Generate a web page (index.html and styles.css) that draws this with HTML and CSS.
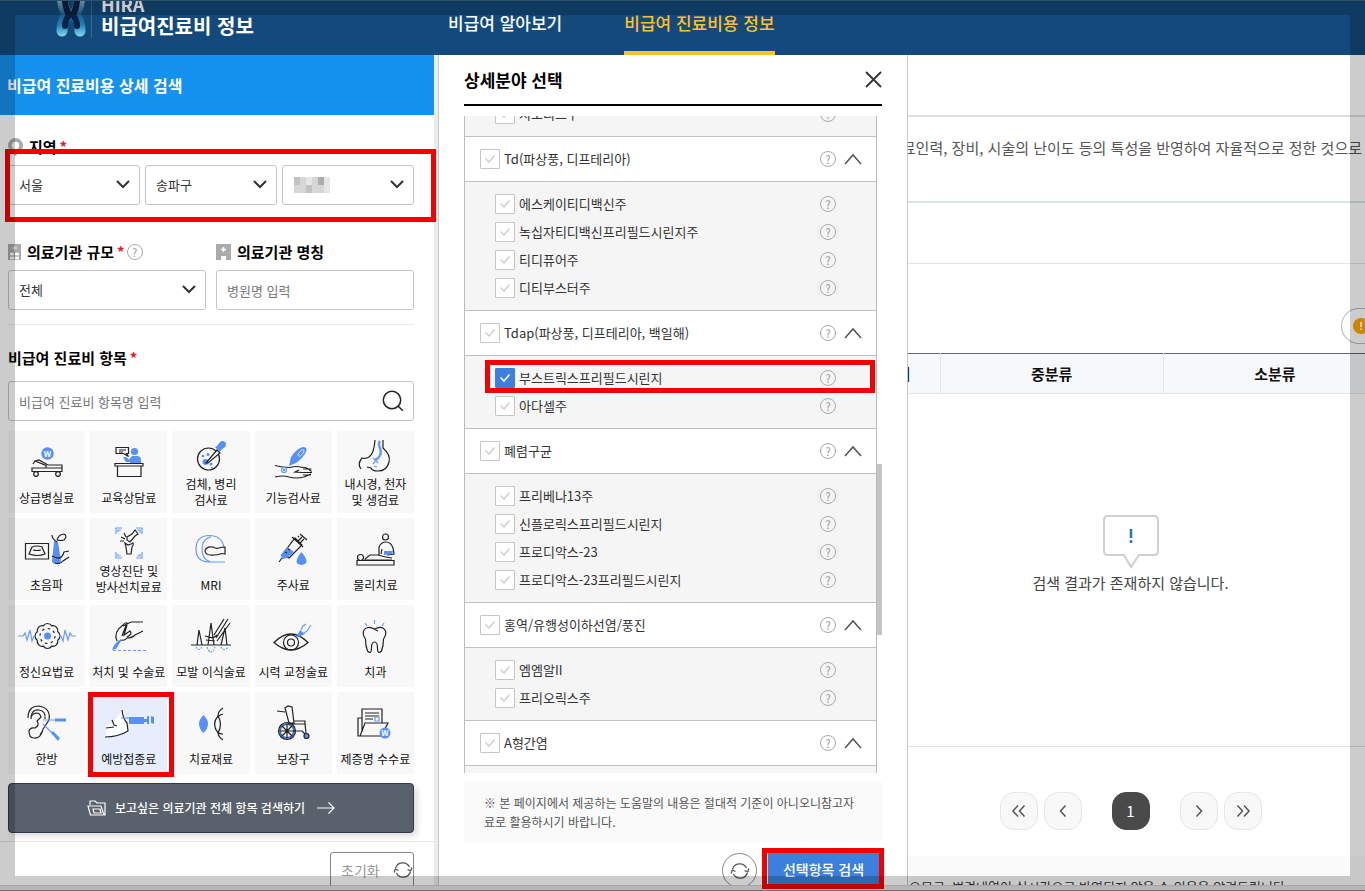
FILE: index.html
```html
<!DOCTYPE html>
<html lang="ko">
<head>
<meta charset="utf-8">
<title>비급여진료비 정보</title>
<link rel="stylesheet" href="styles.css">
</head>
<body>
<svg class="defs" aria-hidden="true">
  <symbol id="down" viewBox="0 0 14 9"><path d="M1.500 1.500 7 7l5.500-5.500" fill="none" stroke="#333" stroke-width="2" stroke-linecap="round"/></symbol>
  <symbol id="up" viewBox="0 0 18 12"><path d="M1 11 9 2l8 9" fill="none" stroke="#555" stroke-width="1.500"/></symbol>
  <symbol id="reload" viewBox="0 0 20 18"><g fill="none" stroke="#555" stroke-width="1.300"><path d="M2.500 7.500A7.500 7.500 0 0 1 16.500 6M17.500 10.500A7.500 7.500 0 0 1 3.500 12"/><path d="M17.800 10 18.800 6.500M17.800 10 14.500 8.500M2.200 8 1.200 11.500M2.200 8 5.500 9.500"/></g></symbol>
</svg>

<header class="top">
  <a class="brand" href="#">
    <svg class="brand-mark" viewBox="0 0 32 38" aria-hidden="true">
      <defs><linearGradient id="lg" gradientUnits="userSpaceOnUse" x1="0" y1="0" x2="0" y2="38"><stop offset="0" stop-color="#7fb4c8"/><stop offset=".4" stop-color="#1d5f94"/><stop offset=".65" stop-color="#1f7fb4"/><stop offset="1" stop-color="#8fe6f6"/></linearGradient></defs>
      <g fill="none" stroke-linecap="round">
        <path d="M7-8Q7 8 13 15 7 20 7 31M25-8Q25 8 19 15 25 20 25 31" stroke="url(#lg)" stroke-width="11"/>
        <path d="M9-8Q10 8 14 15 10 20 10 26M23-8Q22 8 18 15 22 20 22 26" stroke="#0a2044" stroke-width="6"/>
        <path d="M16 24v14" stroke="#13497b" stroke-width="4"/>
      </g>
    </svg>
    <span class="brand-text"><span class="brand-en">HIRA</span><span>비급여진료비 정보</span></span>
  </a>
  <nav class="nav">
    <a href="#">비급여 알아보기</a>
    <a href="#" class="on">비급여 진료비용 정보</a>
  </nav>
</header>

<main class="main">
  <section class="search">
    <h1 class="search-title">비급여 진료비용 상세 검색</h1>
    <form class="form">
      <div class="label-row">
        <svg width="15" height="18" viewBox="0 0 15 18" aria-hidden="true"><path d="M7.500 0a7.500 7.500 0 0 1 7.500 7.500c0 5-7.500 10.500-7.500 10.500S0 12.500 0 7.500A7.500 7.500 0 0 1 7.500 0z" fill="#aaa"/><circle cx="7.500" cy="7.500" r="3.700" fill="#fff"/></svg>
        <span class="label">지역</span><span class="req">*</span>
      </div>
      <div class="row three">
        <span class="pick"><select aria-label="시도"><option>서울</option></select><svg><use href="#down"/></svg></span>
        <span class="pick"><select aria-label="시군구"><option>송파구</option></select><svg><use href="#down"/></svg></span>
        <span class="pick"><select aria-label="읍면동"><option></option></select><svg><use href="#down"/></svg>
          <span class="mosaic" aria-hidden="true"><i></i><i></i><i></i><i></i><i></i><i></i><i></i><i></i><i></i><i></i><i></i><i></i></span></span>
        <span class="mark mark-region"></span>
      </div>

      <div class="row two">
        <div>
          <div class="label-row">
            <svg width="13" height="16" viewBox="0 0 13 16" aria-hidden="true"><path fill="#aaa" d="M0 0h13v16H0z"/><path d="M6.500 1.500v5M4 4h5M2.500 9h3v2h-3zM7.500 9h3v2h-3zM2.500 13h3v2h-3zM7.500 13h3v2h-3z" stroke="#fff" fill="#fff" stroke-width=".8"/></svg>
            <label class="label" for="scale">의료기관 규모</label><span class="req">*</span>
            <button type="button" class="help help-label" aria-label="도움말">?</button>
          </div>
          <span class="pick"><select id="scale"><option>전체</option></select><svg><use href="#down"/></svg></span>
        </div>
        <div>
          <div class="label-row">
            <svg width="15" height="16" viewBox="0 0 15 16" aria-hidden="true"><path fill="#aaa" d="M0 0h15v16h-5v-4H5v4H0z"/><path d="M7.500 3v5M5 5.500h5" stroke="#fff" stroke-width="1.500"/></svg>
            <label class="label" for="name">의료기관 명칭</label>
          </div>
          <input id="name" class="text" type="text" placeholder="병원명 입력">
        </div>
      </div>

      <div class="items-head"><label class="label" for="item">비급여 진료비 항목</label><span class="req">*</span></div>
      <div class="find">
        <input id="item" class="text" type="text" placeholder="비급여 진료비 항목명 입력">
        <button type="button" class="find-btn" aria-label="검색"><svg width="22" height="22" viewBox="0 0 22 22"><circle cx="10" cy="10" r="8.700"/><path d="m16.300 16.300 4.500 4.500"/></svg></button>
      </div>

      <div class="tiles">
        <button type="button" class="tile"><svg viewBox="0 0 60 40"><circle class="b" cx="30.500" cy="10.500" r="6.200"/><text x="30.500" y="13.500">W</text><path d="M15 25h30v3.500H15zM16 21l2-3 11 4.500v2.500M18 18l4-1 9 5h14v3"/><circle cx="19" cy="31" r="2.300"/><circle cx="41" cy="31" r="2.300"/></svg><span>상급병실료</span></button>
        <button type="button" class="tile"><svg viewBox="0 0 60 40"><path d="M17 4.500h12.500v6h-2l2 3-5-3H17zM20 7h7M20 9h4"/><circle class="b" cx="35.500" cy="8.500" r="3.600"/><path class="b" d="M24 14.500l3-.5 3 2.500 3-3.500h6q3 1 3 4v4H31v-2h-4z"/><path d="M16 20.500h28V23H16zM18.500 23h23.500v10.500H18.500z"/></svg><span>교육상담료</span></button>
        <button type="button" class="tile"><svg viewBox="0 0 60 40"><circle cx="27.500" cy="23" r="11"/><circle class="b" cx="24.500" cy="26" r="3"/><circle class="b" cx="30" cy="28" r="1.500"/><circle class="b" cx="22" cy="20" r="1.300"/><circle class="b" cx="27" cy="18.500" r="1.500"/><circle class="b" cx="31" cy="32" r="1"/><path fill="#fff" d="m25 27 11-13 3 3-12 10z"/><path class="b" d="m34 11 2-1 3-4q3-2 5 0t0 5l-4 3-1 2z"/></svg><span>검체, 병리<br>검사료</span></button>
        <button type="button" class="tile"><svg viewBox="0 0 60 40"><path class="b" d="m26 23 2-9q6-9 12-10 5 0 3 5-3 6-10 11z"/><ellipse cx="38" cy="10" rx="1.800" ry="4" transform="rotate(40 38 10)" style="stroke:#fff;stroke-width:.7"/><path d="M12 22.500q7 2 15 2 7-2 12 0 3-1 7 2l2.500 2M12 34q8-2 14 0 7 2 15 0l7-3M36 27l-4 2 7 .5M40 26h8.500M39 29.500h10M40 32h8"/><circle class="l" cx="21" cy="27" r="2.500"/><circle class="l" cx="21" cy="27" r=".7"/></svg><span>기능검사료</span></button>
        <button type="button" class="tile"><svg viewBox="0 0 60 40"><path d="M30 4q-1 14-6 17-3 2-7 1-5 6-1 11M38 4v8q8 7 6 14-2 9-11 9-6 0-7-3l-4-1"/><path class="l" style="stroke-width:2.500" d="M35 5q-2 3 0 7 3 8-5 12"/><path class="l" d="m28 22 5 5M33 22l-5 6M29 30l3 1"/></svg><span>내시경, 천자<br>및 생검료</span></button>

        <button type="button" class="tile"><svg viewBox="0 0 60 40"><path d="M8.500 13.500h23V29h-23zM15 17q5-2 10 0l3 7q-7 3-16 0zM16 20q4 1 8 0"/><path class="b" d="M37 12q2-2 4 0l3 19q0 3-5 3-4 0-4-3z"/><path d="M40 12q-5-3-5-7M40 10q2-6 7-6 4 2 0 6-4 1-7 0M35 26l5 2q5 1 7-6l5-1M38 33q5 2 8-2l6-4"/></svg><span>초음파</span></button>
        <button type="button" class="tile"><svg viewBox="0 0 60 40"><path class="l" d="M17 11V5h6M37 5h6v6M43 29v6h-6M23 35h-6v-6M19 9V7h3M38 7h3v3M41 31v2h-3M22 33h-3v-2"/><path d="m28 14 5-3 3-4 3 4-3 2-5 6-3-2zM26 20l3 2 3-1 2-1q1 2-1 4l-1 7h-4l-1-7zM22 14l4 2M25 10l2 4M21 18h4"/></svg><span>영상진단 및<br>방사선치료료</span></button>
        <button type="button" class="tile"><svg viewBox="0 0 60 40"><path class="l" d="M44 32H27Q15 31 15 19 15 6 28 5.500q13 0 15 12M30 32q-9-2-9-13 0-10 9-12"/><path d="M44 17v7q-3-1-5 0t-6 1q-8 1-9-4 1-5 8-4 3 2 6 1 3-1 6-1z"/></svg><span>MRI</span></button>
        <button type="button" class="tile"><svg viewBox="0 0 60 40"><path d="m32 8 7 7-13 13-7-3zM29 7l11 10M35 11l4-4M37 13l4-4M37 4l7 6M35 7l1-1"/><path class="b" d="m24 17 7 5-7 6-5 1-1-4z"/><path d="m19 28-3 4M22 22l2 1M25 19l2 1"/><path class="b" d="M38.500 22q10 12 0 13-10-1 0-13z"/></svg><span>주사료</span></button>
        <button type="button" class="tile"><svg viewBox="0 0 60 40"><path d="M12 30.500h37V35H12z"/><circle cx="15.500" cy="27.500" r="3"/><circle cx="40.500" cy="7" r="3"/><path d="M19 30h28M20 29l5-4h8q6 2 14 3M34 25v-8q2-5 7-5t7 6l1 6-7 1M37 19l-1 5"/><path class="b" d="M39 21h9l-1 3-8 1z"/></svg><span>물리치료</span></button>

        <button type="button" class="tile"><svg viewBox="0 0 60 40"><path d="M26.300 8.800a5 5 0 0 1 8.400 0a5 5 0 0 1 6 6a5 5 0 0 1 0 8.400a5 5 0 0 1-6 6a5 5 0 0 1-8.400 0a5 5 0 0 1-6-6a5 5 0 0 1 0-8.400a5 5 0 0 1 6-6z"/><circle cx="30.500" cy="19" r="7.500" stroke-dasharray="2.500 3.390"/><circle class="b" cx="30.500" cy="19" r="3.500"/><path class="l" d="M1 19h5l2-3 2 7 3-10 2 11 2-5h1M42 19h2l2 5 2-11 3 10 2-7 2 3h4"/></svg><span>정신요법료</span></button>
        <button type="button" class="tile"><svg viewBox="0 0 60 40"><path d="M18 24q-4-9 6-16 2-3 4-2l-5 13M24 9l8-4q6 0 12 0M21 23q5 1 7-2 5 0 8-3l8-4M28 8l-3 10 6-4q3 3-3 6"/><path class="b" d="m20 23 2 1-5 8-4 1q2-6 7-10z"/><path class="l" stroke-dasharray="3 2" d="M14 33.500h34"/></svg><span>처치 및 수술료</span></button>
        <button type="button" class="tile"><svg viewBox="0 0 60 40"><path d="M10 28h40M16 28l2-15 3 15M27 28l3-22 3 22M40 28l4-17 2 17M33 18 43 2M35 21 47 2M36 24 49 6M24 19l8 2 4-3M25 23l9 1"/><path class="l" stroke-dasharray="2 1" d="M15 30q3 5 6 0M26 30q4 10 8 0M40 30q3 5 7 0"/></svg><span>모발 이식술료</span></button>
        <button type="button" class="tile"><svg viewBox="0 0 60 40"><path d="M11 25.500q17-17 34 0-17 15-34 0z"/><circle cx="28" cy="25.500" r="7.500"/><circle cx="28" cy="25.500" r="3.500"/><path class="b" d="m33 21 4-8 5 4z"/><path class="l" d="m38 13 2-4 3-2M41 16l3-2 4-6"/></svg><span>시력 교정술료</span></button>
        <button type="button" class="tile"><svg viewBox="0 0 60 40"><path d="M29.500 12q8-4 11 2 1 4-2 8 0 7-2 12-4 4-4-3 0-6-3-6t-3 6q0 7-4 3-2-5-2-12-3-4-2-8 3-6 11-2zM27 11l6 3"/><path class="l" d="M20 6l2 3M29.500 3v4M39 6l-2 3"/></svg><span>치과</span></button>

        <button type="button" class="tile"><svg viewBox="0 0 60 40"><path d="M11 14Q11 2 22 2q12 2 10 14-3 5-6 9-2 10-9 9-5 0-5-7 1-4 6-3 5-3 2-7l4-4q-1-4-5-4-5 1-5 6M14 13q1-8 8-7 7 1 6 9M26 26l-3 5"/><path class="l" d="M26 16h12M26 20l9 9"/><path class="b" d="M38 14.500h11v3H38zM34 29l2-2 7 7-2 3z"/></svg><span>한방</span></button>
        <button type="button" class="tile picked"><svg viewBox="0 0 60 40"><path fill="#fff" stroke="none" d="m7 23 9-7 8-10 5 22q-12 4-22 5z"/><path d="M23 6q1 9 5 13l1 8q-10 6-23 6M7 24l8-1M13 16l2 5 3 1"/><path class="b" d="M30 13h15v7H30zM45 15h4v3h-4zM48 12h2v8h-2zM52 12l3 1v7l-3-1z"/><path class="l" d="M22 14h8"/></svg><span>예방접종료</span><i class="mark mark-tile"></i></button>
        <button type="button" class="tile"><svg viewBox="0 0 60 40"><path class="b" d="M22.500 11q9 9 0 18-9-9 0-18z"/><path d="M42 4q-5 3-5 8M42 36q-5-3-5-8M37 12q-7 8 0 17M37 12q5 8 0 17M42 10q-4 1-5 3M42 30q-4 0-5-2"/></svg><span>치료재료</span></button>
        <button type="button" class="tile"><svg viewBox="0 0 60 40"><circle cx="24" cy="27" r="7" style="stroke:#4272c4;stroke-width:2"/><circle cx="24" cy="27" r="8.500"/><path d="M24 20v14M17 27h14M19 22l10 10M29 22 19 32M22 4l3-2 4 1 2 16h-5zM14 7l8 1M31 17h11v3H30M25 20h17l1 9M31 27h8l4 4"/><circle class="b" cx="43.500" cy="32" r="2.500" style="stroke:#222"/></svg><span>보장구</span></button>
        <button type="button" class="tile"><svg viewBox="0 0 60 40"><path d="M17 28V5h20v14M20 9h14M20 12h14M20 15h8M17 14h-4v18h23l7-13H20l-5 13"/><path class="l" d="M30 13h4v4h-4z"/><circle class="b" cx="40" cy="29" r="5.500"/><text x="40" y="32">W</text></svg><span>제증명 수수료</span></button>
      </div>

      <button type="button" class="all">
        <svg width="20" height="17" viewBox="0 0 20 17"><path d="M3 5V1h5l2 2h8v12H3.500L1 6h13l3 9M6 9h7l1 4H7z"/></svg>
        <span>보고싶은 의료기관 전체 항목 검색하기</span>
        <svg width="18" height="12" viewBox="0 0 18 12"><path d="M0 6h17M11.500 .5 17 6l-5.500 5.500"/></svg>
      </button>
    </form>
    <div class="search-foot"><button type="button" class="reset">초기화<svg width="20" height="18"><use href="#reload"/></svg></button></div>
  </section>

  <section class="panel" aria-labelledby="ptitle">
    <div class="panel-head">
      <h2 id="ptitle">상세분야 선택</h2>
      <button type="button" class="close" aria-label="닫기"><svg width="17" height="17" viewBox="0 0 17 17"><path d="m1 1 15 15M16 1 1 16"/></svg></button>
    </div>
    <div class="list-wrap">
      <div class="list">
        <div class="list-in">
          <div class="group-items first"><div class="item"><label><input type="checkbox">지모리스주</label><button class="help" aria-label="도움말">?</button></div></div>

          <div class="group"><label><input type="checkbox">Td(파상풍, 디프테리아)</label><button class="help" aria-label="도움말">?</button><button class="fold" aria-label="접기"><svg><use href="#up"/></svg></button></div>
          <div class="group-items">
            <div class="item"><label><input type="checkbox">에스케이티디백신주</label><button class="help" aria-label="도움말">?</button></div>
            <div class="item"><label><input type="checkbox">녹십자티디백신프리필드시린지주</label><button class="help" aria-label="도움말">?</button></div>
            <div class="item"><label><input type="checkbox">티디퓨어주</label><button class="help" aria-label="도움말">?</button></div>
            <div class="item"><label><input type="checkbox">디티부스터주</label><button class="help" aria-label="도움말">?</button></div>
          </div>

          <div class="group"><label><input type="checkbox">Tdap(파상풍, 디프테리아, 백일해)</label><button class="help" aria-label="도움말">?</button><button class="fold" aria-label="접기"><svg><use href="#up"/></svg></button></div>
          <div class="group-items">
            <div class="item"><label><input type="checkbox" checked>부스트릭스프리필드시린지</label><button class="help" aria-label="도움말">?</button><i class="mark mark-item"></i></div>
            <div class="item"><label><input type="checkbox">아다셀주</label><button class="help" aria-label="도움말">?</button></div>
          </div>

          <div class="group"><label><input type="checkbox">폐렴구균</label><button class="help" aria-label="도움말">?</button><button class="fold" aria-label="접기"><svg><use href="#up"/></svg></button></div>
          <div class="group-items">
            <div class="item"><label><input type="checkbox">프리베나13주</label><button class="help" aria-label="도움말">?</button></div>
            <div class="item"><label><input type="checkbox">신플로릭스프리필드시린지</label><button class="help" aria-label="도움말">?</button></div>
            <div class="item"><label><input type="checkbox">프로디악스-23</label><button class="help" aria-label="도움말">?</button></div>
            <div class="item"><label><input type="checkbox">프로디악스-23프리필드시린지</label><button class="help" aria-label="도움말">?</button></div>
          </div>

          <div class="group"><label><input type="checkbox">홍역/유행성이하선염/풍진</label><button class="help" aria-label="도움말">?</button><button class="fold" aria-label="접기"><svg><use href="#up"/></svg></button></div>
          <div class="group-items">
            <div class="item"><label><input type="checkbox">엠엠알II</label><button class="help" aria-label="도움말">?</button></div>
            <div class="item"><label><input type="checkbox">프리오릭스주</label><button class="help" aria-label="도움말">?</button></div>
          </div>

          <div class="group"><label><input type="checkbox">A형간염</label><button class="help" aria-label="도움말">?</button><button class="fold" aria-label="접기"><svg><use href="#up"/></svg></button></div>
          <div class="group-items last"></div>
        </div>
      </div>
      <div class="track"><div class="thumb"></div></div>
    </div>
    <p class="note">※ 본 페이지에서 제공하는 도움말의 내용은 절대적 기준이 아니오니참고자<br>료로 활용하시기 바랍니다.</p>
    <div class="panel-foot">
      <button type="button" class="round" aria-label="초기화"><svg width="20" height="18"><use href="#reload"/></svg></button>
      <span class="go-wrap"><button type="button" class="go">선택항목 검색</button><i class="mark mark-go"></i></span>
    </div>
  </section>

  <section class="result">
    <div class="gap-top"></div>
    <p class="intro"><span>의료인력, 장비, 시술의 난이도 등의 특성을 반영하여 자율적으로 정한 것으로</span></p>
    <div class="gap-mid"></div>
    <div class="tools"><button type="button" class="pill" aria-label="안내"><svg width="16" height="16" viewBox="0 0 16 16"><circle cx="8" cy="8" r="8" fill="#ffa800"/><path d="M8 4v5M8 10.500v1.500" stroke="#fff" stroke-width="2"/></svg></button></div>
    <table class="grid"><thead><tr><th class="c0">소재지</th><th>중분류</th><th>소분류</th></tr></thead></table>
    <div class="empty">
      <svg width="56" height="54" viewBox="0 0 56 54" aria-hidden="true"><path d="M5 1h46q4 0 4 4v31q0 4-4 4H36l-8 12-7-12H5q-4 0-4-4V5q0-4 4-4z" fill="#fff" stroke="#d0d0d0" stroke-width="2"/><path d="M28 14v9" stroke="#2277b5" stroke-width="2.500"/><circle cx="28" cy="26.500" r="1.500" fill="#2277b5"/></svg>
      <p>검색 결과가 존재하지 않습니다.</p>
    </div>
    <nav class="pages" aria-label="페이지">
      <button aria-label="처음"><svg viewBox="0 0 16 14"><path d="M7 1.500 2 7l5 5.500M13.500 1.500 8.500 7l5 5.500"/></svg></button>
      <button aria-label="이전"><svg viewBox="0 0 16 14"><path d="M10.500 1.500 5.500 7l5 5.500"/></svg></button>
      <button class="cur">1</button>
      <button aria-label="다음"><svg viewBox="0 0 16 14"><path d="m5.500 1.500 5 5.500-5 5.500"/></svg></button>
      <button aria-label="마지막"><svg viewBox="0 0 16 14"><path d="m2.500 1.500 5 5.500-5 5.500M9 1.500 14 7l-5 5.500"/></svg></button>
    </nav>
    <div class="legal"><span>으므로, 변경내역이 실시간으로 반영되지 않을 수 있음을 알려드립니다.</span></div>
  </section>
</main>
<footer class="edge"></footer>
<div class="frame"></div>
</body>
</html>
```
FILE: styles.css
```css
* { box-sizing: border-box; }
body {
  margin: 0;
  height: 100vh;
  display: flex;
  flex-direction: column;
  overflow: hidden;
  background: #fff;
  color: #333;
  font: 13px/20px "Noto Sans CJK KR", "Noto Sans", sans-serif;
}
h1, h2, p { margin: 0; }
a { color: inherit; text-decoration: none; }
button, input, select { font: inherit; color: inherit; }
button { padding: 0; border: 0; background: none; }
svg { display: block; flex: none; }
.defs { width: 0; height: 0; position: absolute; }

/* outline boxes laid over the highlighted controls */
.mark {
  position: absolute;
  z-index: 5;
  border: 5px solid #f50000;
  pointer-events: none;
}
.mark-region { inset: -16px -22px -17px -3px; }
.mark-tile { inset: 0 -7px -3px -2px; }
.mark-item { inset: -4px 1px -1px 20px; }
.mark-go { inset: -5px -5px -4px -6px; }

.frame {
  position: fixed;
  inset: 0;
  z-index: 10;
  border: 15px solid rgba(0, 0, 0, .2);
  pointer-events: none;
}
.edge {
  position: relative;
  z-index: 2;
  flex: 0 0 6px;
  background: #e4e4e4;
  border-top: 1px solid #d0d0d0;
  border-bottom: 1px solid #8c8c8c;
}

.top {
  flex: 0 0 55px;
  display: flex;
  overflow: hidden;
  background: #13497b;
  border-top: 1px solid #3d6687;
  color: #fff;
}
.brand {
  flex: 0 0 393px;
  height: 37px;
  margin-left: 55px;
  display: flex;
  align-items: flex-end;
}
.brand-mark { width: 32px; height: 38px; }
.brand-text {
  display: flex;
  flex-direction: column;
  margin-left: 4px;
  padding-left: 9px;
  border-left: 1px solid #3d6687;
  font-size: 20px;
  font-weight: 700;
  line-height: 24px;
}
.brand-en { font-size: 18px; line-height: 20px; }
.nav { display: flex; gap: 62px; font-size: 17px; font-weight: 500; line-height: 44px; }
.nav .on { color: #fdc02f; border-bottom: 4px solid #fdc02f; }

.main { flex: 1; min-height: 0; display: flex; }

/* search column */
.search {
  flex: 0 0 439px;
  display: flex;
  flex-direction: column;
  border-right: 1px solid #c8c8c8;
  box-shadow: inset -4px 0 #ececec;
  padding-right: 4px;
}
.search-title {
  flex: none;
  padding-left: 7px;
  background: #1591f0;
  color: #fff;
  font-size: 16px;
  font-weight: 700;
  line-height: 60px;
}
.form { padding: 22px 20px 8px 8px; display: flex; flex-direction: column; }
.label-row { display: flex; align-items: center; gap: 6px; height: 20px; }
.label { color: #000; font-size: 15px; font-weight: 700; }
.req { color: #e0202a; font-size: 15px; font-weight: 700; margin-left: -3px; }
.row { position: relative; display: grid; }
.three { grid-template-columns: repeat(3, 1fr); gap: 5px; margin-top: 8px; }
.two {
  grid-template-columns: 1fr 1fr;
  gap: 10px;
  margin-top: 37px;
  padding-bottom: 14px;
  border-bottom: 1px solid #ebebeb;
}
.two .label-row { margin-bottom: 8px; }
.pick { position: relative; display: block; }
.pick select, .text {
  display: block;
  width: 100%;
  height: 40px;
  padding: 0 10px;
  border: 1px solid #c4c4c4;
  border-radius: 3px;
  background: #fff;
  appearance: none;
  outline: 0;
}
.pick > svg { position: absolute; right: 10px; top: 15px; width: 14px; height: 9px; pointer-events: none; }
.mosaic {
  position: absolute;
  left: 12px;
  top: 12px;
  display: grid;
  grid-template-columns: repeat(6, 6px);
  grid-auto-rows: 8px;
}
.mosaic i { background: #d6d6d6; }
.mosaic i:nth-child(3n) { background: #e6e6e6; }
.mosaic i:nth-child(4n+1) { background: #c2c2c2; }
.mosaic i:nth-child(5) { background: #adadad; }
.text::placeholder { color: #777; opacity: 1; }
.help {
  flex: none;
  width: 16px;
  height: 16px;
  border: 1px solid #a8a8a8;
  border-radius: 50%;
  color: #999;
  font-size: 11px;
  line-height: 14px;
  text-align: center;
}
.help-label { margin-left: -4px; }
.items-head { display: flex; gap: 6px; margin: 23px 0 13px; }
.find { position: relative; }
.find-btn { position: absolute; right: 10px; top: 9px; }
.find-btn svg { fill: none; stroke: #222; stroke-width: 1.500; }

.tiles { display: grid; grid-template-columns: repeat(5, 1fr); grid-auto-rows: 82px; gap: 5px; margin-top: 10px; }
.tile {
  position: relative;
  min-width: 0;
  display: flex;
  flex-direction: column;
  align-items: center;
  justify-content: space-between;
  padding: 5px 0 7px;
  background: #f8f8f8;
  color: #111;
  font-size: 12px;
  line-height: 16px;
  white-space: nowrap;
}
.tile > svg { width: 60px; height: 40px; margin: auto 0; fill: none; stroke: #222; stroke-width: 1.200; }
.tile > span { flex: none; }
.tile .b { fill: #5790f7; stroke: none; }
.tile .l { stroke: #6a9cf5; }
.tile text { fill: #fff; stroke: none; font-size: 8px; font-weight: 700; text-anchor: middle; }
.tile.picked { background: #e6eefe; }

.all {
  display: flex;
  align-items: center;
  justify-content: center;
  gap: 8px;
  height: 50px;
  margin-top: 9px;
  border: 1px solid #323a45;
  border-radius: 4px;
  background: #59616d;
  box-shadow: 3px 3px 6px rgba(0, 0, 0, .15);
  color: #fff;
  font-size: 12px;
  font-weight: 500;
}
.all svg { fill: none; stroke: #fff; stroke-width: 1.200; }
.all svg:last-child { margin-left: 4px; }
.search-foot { display: flex; justify-content: flex-end; padding: 10px 20px 0 0; border-top: 1px solid #e4e4e4; }
.reset {
  display: flex;
  align-items: center;
  justify-content: space-between;
  width: 84px;
  height: 36px;
  padding-left: 10px;
  border: 1px solid #888;
  border-radius: 3px;
  color: #999;
  font-size: 14px;
}

/* detail panel */
.panel {
  flex: 0 0 469px;
  display: flex;
  flex-direction: column;
  padding: 0 25px;
  border-right: 1px solid #c8c8c8;
}
.panel-head {
  flex: 0 0 51px;
  display: flex;
  align-items: center;
  justify-content: space-between;
  border-bottom: 2px solid #000;
}
.panel-head h2 { color: #000; font-size: 17px; font-weight: 700; }
.close svg { fill: none; stroke: #333; stroke-width: 1.800; }
.list-wrap { flex: 1; min-height: 0; display: flex; margin-top: 10px; }
.list { flex: 1; overflow: hidden; border: solid #bbb; border-width: 0 1px; }
.list-in { margin-top: -16px; }
.track { flex: 0 0 5px; display: flex; flex-direction: column; }
.thumb { height: 26%; margin-top: 348px; background: #c4c4c4; }
.list label { flex: 1; display: flex; align-items: center; gap: 4px; }
.list input {
  appearance: none;
  width: 20px;
  height: 20px;
  margin: 0;
  border: 1px solid #c6c6c6;
  border-radius: 1px;
  background: #fff url("data:image/svg+xml,%3Csvg xmlns='http://www.w3.org/2000/svg' viewBox='0 0 18 18'%3E%3Cpath d='M4.500 8.500 8 12l5.500-6.500' fill='none' stroke='%23ccc' stroke-width='1.300'/%3E%3C/svg%3E");
}
.list input:checked {
  border-color: #3a80dc;
  background: #3a80dc url("data:image/svg+xml,%3Csvg xmlns='http://www.w3.org/2000/svg' viewBox='0 0 18 18'%3E%3Cpath d='M4.500 8.500 8 12l5.500-6.500' fill='none' stroke='%23fff' stroke-width='1.600'/%3E%3C/svg%3E");
}
.group {
  display: flex;
  align-items: center;
  height: 46px;
  padding: 0 14px 0 15px;
  border: solid #c0c0c0;
  border-width: 1px 0;
}
.fold { margin-left: 8px; }
.fold svg { width: 18px; height: 12px; }
.group-items { padding: 8px 0; background: #f5f5f5; }
.first { padding-top: 0; }
.last { height: 28px; }
.item { position: relative; display: flex; align-items: center; height: 28px; padding: 0 40px 0 30px; }
.note { margin-top: 9px; padding: 11px 20px; background: #fafafa; color: #555; font-size: 12px; line-height: 19px; white-space: nowrap; }
.panel-foot {
  flex: 0 0 43px;
  min-height: 0;
  height: 43px;
  display: flex;
  align-items: flex-start;
  justify-content: flex-end;
  gap: 11px;
  padding: 11px 3px 0 0;
}
.round {
  display: flex;
  align-items: center;
  justify-content: center;
  width: 35px;
  height: 35px;
  border: 1px solid #888;
  border-radius: 50%;
}
.go-wrap { position: relative; }
.go { display: block; width: 111px; height: 32px; background: #3a80dc; color: #fff; font-size: 14px; font-weight: 500; }

/* result column */
.result { flex: 1; min-width: 0; display: flex; flex-direction: column; overflow: hidden; }
.gap-top { flex: 0 0 62px; border-bottom: 2px solid #dce0e3; }
.intro {
  flex: 0 0 86px;
  display: flex;
  justify-content: flex-end;
  padding: 21px 3px 0 0;
  border-bottom: 2px solid #dbe4e5;
  color: #555;
  font-size: 15px;
  white-space: nowrap;
}
.gap-mid { flex: 0 0 61px; border-bottom: 1px solid #e4e4e4; }
.tools { flex: 0 0 89px; display: flex; justify-content: flex-end; align-items: flex-end; padding-bottom: 9px; }
.pill { width: 24px; height: 36px; padding-left: 11px; border: 1px solid #bbb; border-right: 0; border-radius: 18px 0 0 18px; }
.grid { flex: none; table-layout: fixed; width: 547px; margin-left: -68px; border-collapse: collapse; }
.grid th {
  height: 40px;
  padding: 0;
  border: solid #e4e6e8;
  border-width: 1px 1px 1px 0;
  border-top-color: #666;
  background: #f7f8fa;
  color: #111;
  font-size: 15px;
  font-weight: 700;
}
.grid .c0 { width: 100px; }
.empty {
  flex: 1;
  display: flex;
  flex-direction: column;
  align-items: center;
  justify-content: center;
  gap: 4px;
  padding: 0 12px 33px 0;
  border-bottom: 1px solid #e0e0e0;
  color: #444;
  font-size: 15px;
}
.pages { flex: 0 0 109px; display: flex; align-items: flex-start; justify-content: center; gap: 6px; padding: 45px 12px 0 0; }
.pages button {
  display: flex;
  align-items: center;
  justify-content: center;
  width: 38px;
  height: 38px;
  border: 1px solid #e6e6e6;
  border-radius: 14px;
  background: #f8f8f8;
}
.pages svg { width: 16px; height: 14px; fill: none; stroke: #555; stroke-width: 1.500; }
.pages .cur { margin: 0 24px; border-color: #4a4a4a; background: #4a4a4a; color: #fff; font-size: 15px; }
.legal {
  flex: 0 0 29px;
  overflow: hidden;
  padding: 21px 0 0 1px;
  background: #fafafa;
  white-space: nowrap;
}
```
